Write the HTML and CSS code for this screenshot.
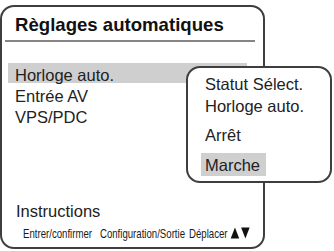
FILE: index.html
```html
<!DOCTYPE html>
<html lang="fr">
<head>
<meta charset="utf-8">
<title>Règlages automatiques</title>
<link rel="stylesheet" href="styles.css">
</head>
<body>
<div class="panel">
  <h1 class="title">Règlages automatiques</h1>
  <div class="divider"></div>
  <ul class="menu">
    <li class="menu-item selected">Horloge auto.</li>
    <li class="menu-item">Entrée AV</li>
    <li class="menu-item">VPS/PDC</li>
  </ul>
  <div class="footer">
    <div class="instructions">Instructions</div>
    <div class="hints">
      <span class="hint">Entrer/confirmer</span>
      <span class="hint hint-config">Configuration/Sortie</span>
      <span class="hint hint-move">Déplacer</span>
      <svg class="arrows" width="27" height="12" viewBox="0 0 21 10" aria-hidden="true">
        <polygon points="0,9.6 4.5,0.4 9,9.6" fill="#111"/>
        <polygon points="11,0.4 20,0.4 15.5,9.6" fill="#111"/>
      </svg>
    </div>
  </div>
  <div class="popup">
    <div class="popup-head">Statut Sélect.<br>Horloge auto.</div>
    <div class="popup-option">Arrêt</div>
    <div class="popup-option active"><span class="popup-mark">Marche</span></div>
  </div>
</div>
</body>
</html>
```
FILE: styles.css
```css
html, body {
  margin: 0;
  padding: 0;
  background: #ffffff;
}
body {
  width: 334px;
  height: 251px;
  overflow: hidden;
  font-family: "Liberation Sans", Arial, sans-serif;
  color: #222;
}
.panel {
  position: relative;
  box-sizing: border-box;
  width: 265px;
  height: 244px;
  margin-top: 5px;
  border: 2px solid #3e3e3e;
  border-radius: 14px;
  display: flex;
  flex-direction: column;
}
.title {
  margin: 6px 0 0 13px;
  font-size: 18.6px;
  line-height: 24px;
  font-weight: bold;
  color: #111;
}
.divider {
  height: 2px;
  margin: 3px 8px 0 3px;
  background: #858585;
}
.menu {
  list-style: none;
  margin: 21px 0 0 0;
  padding: 0;
  font-size: 16.5px;
}
.menu-item {
  box-sizing: border-box;
  height: 20px;
  margin: 0 0 1px 6px;
  width: 239px;
  padding: 4px 0 0 7px;
  line-height: 17px;
}
.selected {
  background: #cfcfcf;
}
.footer {
  margin-top: auto;
  padding: 0 0 6px 14px;
}
.instructions {
  font-size: 16.5px;
  line-height: 20px;
}
.hints {
  display: flex;
  align-items: flex-end;
  width: 300px;
  margin: 6px 0 0 7px;
  font-size: 12.2px;
  line-height: 14px;
  color: #1a1a1a;
  white-space: nowrap;
  transform: scaleX(0.79);
  transform-origin: left center;
}
.hint-config {
  margin-left: 10px;
}
.hint-move {
  margin-left: 5px;
}
.arrows {
  flex: none;
  margin: 0 0 2px 3px;
}
.popup {
  position: absolute;
  left: 184px;
  top: 59px;
  box-sizing: border-box;
  width: 146px;
  height: 117px;
  background: #fff;
  border: 2px solid #3e3e3e;
  border-radius: 14px;
  padding: 5px 0 0 13px;
  font-size: 16.5px;
  color: #222;
}
.popup-head {
  padding-left: 4px;
  line-height: 22px;
}
.popup-option {
  margin-top: 7px;
  padding-left: 4px;
  line-height: 22px;
}
.popup-option.active {
  padding-left: 0;
  margin-top: 7px;
}
.popup-mark {
  display: inline-block;
  background: #cfcfcf;
  padding: 1px 6px 0 4px;
  height: 22px;
  line-height: 22px;
}
```
